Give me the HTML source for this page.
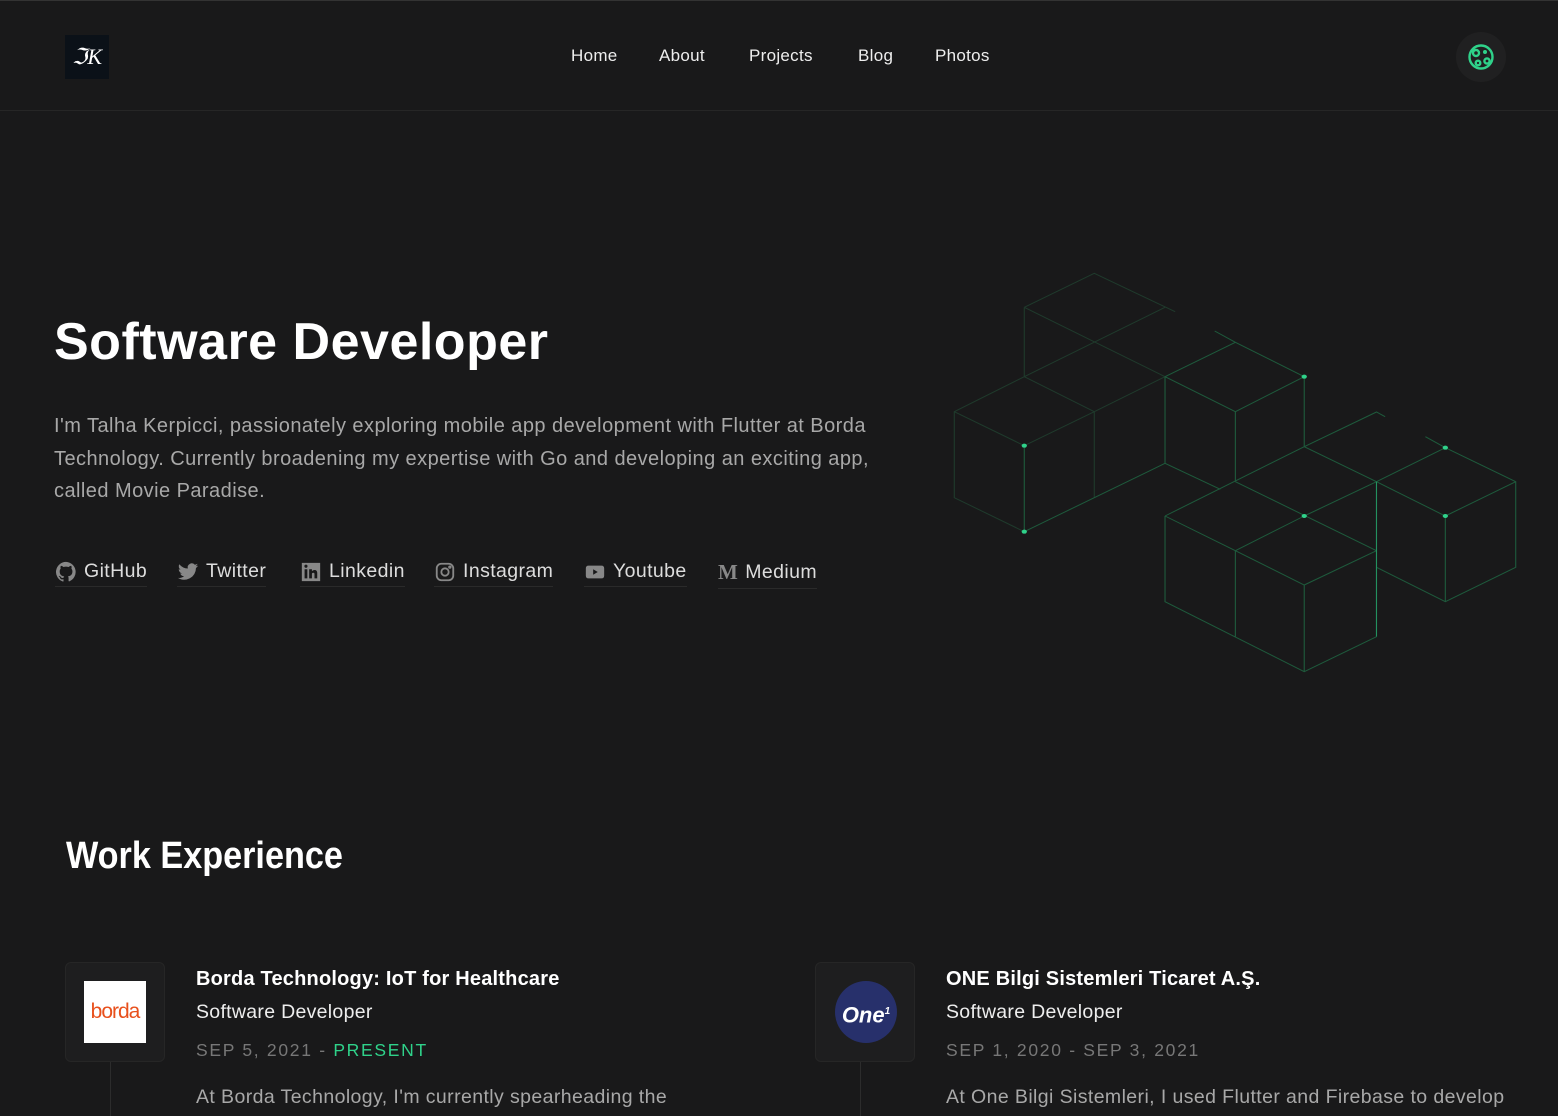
<!DOCTYPE html>
<html><head><meta charset="utf-8"><style>
*{margin:0;padding:0;box-sizing:border-box}
body{width:1558px;height:1116px;overflow:hidden;background:#19191a;font-family:"Liberation Sans",sans-serif;color:#e5e5e5;position:relative}
.hdr{position:absolute;left:0;top:0;width:1558px;height:111px;border-top:1px solid #333;border-bottom:1px solid #262626;background:#19191a}
.logo{position:absolute;left:65px;top:34px;width:44px;height:44px;background:#0b1118;color:#fff;font:italic 22px "Liberation Serif",serif;text-align:center;line-height:44px}
.nav{position:absolute;top:45px;font-size:17px;color:#eee;letter-spacing:0.3px}
.theme{position:absolute;left:1456px;top:31px;width:50px;height:50px;border-radius:50%;background:#202021}
h1{position:absolute;left:54px;top:312px;font-size:52px;font-weight:700;color:#fff;letter-spacing:0.5px}
.intro{position:absolute;left:54px;top:410px;width:850px;font-size:20px;line-height:32.5px;color:#a8a8a8;letter-spacing:0.45px}
.soc{position:absolute;top:560px;font-size:19.5px;color:#ddd;display:flex;align-items:center;gap:7px;padding-bottom:3px;border-bottom:1px solid #2a2a2a;letter-spacing:0.4px}
.soc svg{fill:#888}
h2{position:absolute;left:66px;top:835px;font-size:38px;font-weight:700;color:#fff;transform:scaleX(0.9);transform-origin:left}
.card{position:absolute;width:100px;height:100px;border-radius:6px;background:#1e1e1f;border:1px solid #262626}
.vl{position:absolute;width:1px;background:#2c2c2c;top:1062px;height:54px}
.t{position:absolute;font-size:20px;font-weight:700;color:#fff;letter-spacing:0.2px}
.r{position:absolute;font-size:19.5px;color:#eee;letter-spacing:0.3px}
.d{position:absolute;font-size:17.5px;letter-spacing:1.7px;color:#777}
.p{position:absolute;font-size:19.5px;color:#a8a8a8;letter-spacing:0.4px}
</style></head><body>
<div class="hdr">
<div class="logo">ℑK</div>
<div class="nav" style="left:571px">Home</div>
<div class="nav" style="left:659px">About</div>
<div class="nav" style="left:749px">Projects</div>
<div class="nav" style="left:858px">Blog</div>
<div class="nav" style="left:935px">Photos</div>
<div class="theme"><svg width="50" height="50" viewBox="0 0 50 50" fill="none" stroke="#2fd28a" stroke-width="2.4"><circle cx="25" cy="25" r="11.5"/><circle cx="20" cy="21" r="3"/><circle cx="22" cy="31" r="2.3"/><circle cx="31" cy="29" r="2.6"/><circle cx="29" cy="20" r="0.8" fill="#2fd28a"/></svg></div>
</div>

<h1>Software Developer</h1>
<div class="intro">I'm Talha Kerpicci, passionately exploring mobile app development with Flutter at Borda Technology. Currently broadening my expertise with Go and developing an exciting app, called Movie Paradise.</div>

<div class="soc" style="left:55px"><svg width="22" height="22" viewBox="0 0 24 24"><path d="M12 1a11 11 0 0 0-3.5 21.4c.6.1.8-.2.8-.5v-2c-3.1.7-3.7-1.4-3.7-1.4-.5-1.3-1.2-1.6-1.2-1.6-1-.7.1-.7.1-.7 1.1.1 1.700 1.1 1.7 1.1 1 1.7 2.6 1.2 3.2.9.1-.7.4-1.2.7-1.5-2.5-.3-5-1.2-5-5.4 0-1.2.4-2.2 1.1-3-.1-.3-.5-1.4.1-2.9 0 0 .9-.3 3 1.1a10 10 0 0 1 5.5 0c2.1-1.4 3-1.1 3-1.1.6 1.5.2 2.6.1 2.9.7.8 1.1 1.8 1.1 3 0 4.2-2.6 5.1-5 5.4.4.3.8 1 .8 2v3c0 .3.2.6.8.5A11 11 0 0 0 12 1z"/></svg>GitHub</div>
<div class="soc" style="left:177px"><svg width="22" height="22" viewBox="0 0 24 24"><path d="M23 5a9 9 0 0 1-2.6.7A4.5 4.5 0 0 0 22.4 3a9 9 0 0 1-2.9 1.1 4.5 4.5 0 0 0-7.7 4.1A12.8 12.8 0 0 1 2.5 3.5a4.5 4.5 0 0 0 1.4 6 4.5 4.5 0 0 1-2-.6 4.5 4.5 0 0 0 3.6 4.5 4.5 4.5 0 0 1-2 .1 4.5 4.5 0 0 0 4.200 3.1A9 9 0 0 1 1 18.4 12.8 12.8 0 0 0 20.7 7.6 9 9 0 0 0 23 5z"/></svg>Twitter</div>
<div class="soc" style="left:300px"><svg width="22" height="22" viewBox="0 0 24 24"><path d="M2 2h20v20H2zM5 9v10h3V9zm1.5-5A1.7 1.7 0 1 0 6.5 7.4 1.7 1.7 0 0 0 6.5 4zM10 9v10h3v-5c0-1.5 2.8-1.7 2.8 0v5h3v-6c0-4-4.3-3.8-5.800-1.9V9z" fill-rule="evenodd"/></svg>Linkedin</div>
<div class="soc" style="left:434px"><svg width="22" height="22" viewBox="0 0 24 24" style="fill:none" stroke="#888" stroke-width="2"><rect x="3" y="3" width="18" height="18" rx="5"/><circle cx="12" cy="12" r="4"/><circle cx="17.3" cy="6.7" r=".8"/></svg>Instagram</div>
<div class="soc" style="left:584px"><svg width="22" height="22" viewBox="0 0 24 24"><path d="M2 8c0-2 1-3 3-3h14c2 0 3 1 3 3v8c0 2-1 3-3 3H5c-2 0-3-1-3-3zm8 1v6l5-3z" fill-rule="evenodd"/></svg>Youtube</div>
<div class="soc" style="left:718px"><span style="font:bold 21px 'Liberation Serif',serif;color:#888">M</span>Medium</div>

<svg style="position:absolute;left:940px;top:260px" width="590" height="420" viewBox="0 0 1568 1260" preserveAspectRatio="none" fill="none" stroke-width="3">
<g stroke="#1f3a2c">
<path d="M224 142L410 40L625 155M224 142V350M224 142L598 350M598 142L224 350L38 455V713L224 815M38 455L224 557L410 455M224 350L410 455L598 350M410 455V713"/>
</g>
<g stroke="#1e5a3c">
<path d="M224 557V815L410 713L598 610L745 688M598 350V610M598 350L785 247M730 213L785 247L968 350M598 350L785 455L968 350M785 455V665M968 350V560M968 560L1160 456L1183 470M968 560L598 768M968 560L1160 665M785 665L1160 872M598 768L785 872L968 768M598 768V1025L968 1235L1160 1130M785 872V1130M785 872L968 975L1160 872M968 975V1235M968 768L1160 665M1160 665L1343 563L1530 665V922L1343 1025L1160 922M1290 530L1343 563M1160 665L1343 768L1530 665M1343 768V1025"/>
</g>
<path d="M1160 665V1130" stroke="#239160"/>
<g fill="#2fd28a"><ellipse cx="968" cy="350" rx="7" ry="6"/><ellipse cx="224" cy="557" rx="7" ry="6"/><ellipse cx="224" cy="815" rx="7" ry="6"/><ellipse cx="968" cy="768" rx="7" ry="6"/><ellipse cx="1343" cy="563" rx="7" ry="6"/><ellipse cx="1343" cy="768" rx="7" ry="6"/></g>
</svg>

<h2>Work Experience</h2>

<div class="card" style="left:65px;top:962px"><div style="position:absolute;left:18px;top:18px;width:62px;height:62px;background:#fff;color:#e8501c;font-size:21px;line-height:62px;text-align:center;letter-spacing:-1px">borda</div></div>
<div class="vl" style="left:110px"></div>
<div class="t" style="left:196px;top:968px">Borda Technology: IoT for Healthcare</div>
<div class="r" style="left:196px;top:1001px">Software Developer</div>
<div class="d" style="left:196px;top:1040px">SEP 5, 2021 - <span style="color:#2fd28a">PRESENT</span></div>
<div class="p" style="left:196px;top:1086px">At Borda Technology, I'm currently spearheading the</div>

<div class="card" style="left:815px;top:962px"><div style="position:absolute;left:19px;top:18px;width:62px;height:62px;border-radius:50%;background:#27306b;color:#fff;font:italic bold 22px 'Liberation Sans',sans-serif;line-height:62px;text-align:center">One<sup style="font-size:10px">1</sup></div></div>
<div class="vl" style="left:860px"></div>
<div class="t" style="left:946px;top:968px">ONE Bilgi Sistemleri Ticaret A.Ş.</div>
<div class="r" style="left:946px;top:1001px">Software Developer</div>
<div class="d" style="left:946px;top:1040px">SEP 1, 2020 - SEP 3, 2021</div>
<div class="p" style="left:946px;top:1086px">At One Bilgi Sistemleri, I used Flutter and Firebase to develop</div>
</body></html>
